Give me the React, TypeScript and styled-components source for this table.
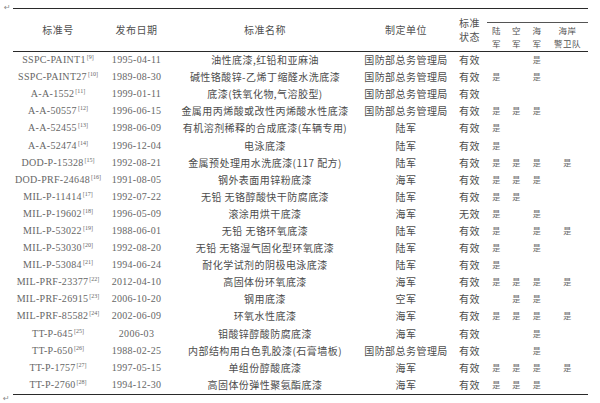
import styled, { createGlobalStyle } from "styled-components";

const GlobalStyle = createGlobalStyle`
  html, body {
    margin: 0;
    padding: 0;
    background: #fff;
  }
  body {
    font-family: "Liberation Serif", "Noto Sans CJK SC", serif;
    color: #444;
  }
`;

const Page = styled.div`
  width: 600px;
  height: 403px;
  box-sizing: border-box;
  padding-top: 8px;
  display: grid;
  grid-template-columns: 13px 575px;
  grid-template-rows: auto auto;
  overflow: hidden;
`;

const ParaMark = styled.span<{ $bottom?: boolean }>`
  font-family: "DejaVu Sans", sans-serif;
  font-size: 8px;
  line-height: 8px;
  color: #8a8a8a;
  padding-left: ${(p) => (p.$bottom ? "3px" : "4px")};
  margin-top: ${(p) => (p.$bottom ? "0" : "-4px")};
`;

const Table = styled.table`
  border-collapse: collapse;
  table-layout: fixed;
  width: 575px;
  border-top: 1.5px solid #2a2a2a;
  border-bottom: 1.5px solid #2a2a2a;
`;

const HeadCell = styled.th<{ $sub?: boolean; $group?: boolean }>`
  padding: 0;
  font-weight: normal;
  font-family: "Noto Sans CJK SC", sans-serif;
  font-size: ${(p) => (p.$sub ? "8.5px" : "10px")};
  line-height: ${(p) => (p.$sub ? "12.5px" : "14px")};
  letter-spacing: 0.5px;
  color: #505050;
  text-align: center;
  vertical-align: middle;
  border-bottom: ${(p) => (p.$group ? "1px solid #555" : "1px solid #2a2a2a")};
`;

const TopRow = styled.tr`
  height: 13.5px;
`;

const SubRow = styled.tr`
  height: 29px;
`;

const BodyRow = styled.tr`
  height: 17.1px;
`;

const Cell = styled.td<{ $kind: "latin" | "cjk" | "mark" }>`
  padding: 0;
  height: 17.1px;
  line-height: 12px;
  text-align: center;
  vertical-align: middle;
  white-space: nowrap;
  overflow: visible;
  font-family: ${(p) =>
    p.$kind === "latin"
      ? '"Liberation Serif", serif'
      : '"Noto Sans CJK SC", sans-serif'};
  font-size: ${(p) => (p.$kind === "mark" ? "8px" : "10px")};
  letter-spacing: ${(p) => (p.$kind === "cjk" ? "0.45px" : "0.3px")};
  color: ${(p) => (p.$kind === "latin" ? "#666" : p.$kind === "mark" ? "#6a6a6a" : "#4c4c4c")};
`;

const Ref = styled.sup`
  font-size: 6px;
  line-height: 0;
  vertical-align: 4px;
  margin-left: 1px;
  letter-spacing: 0;
`;

type Row = {
  id: string;
  ref: number;
  date: string;
  name: string;
  unit: string;
  status: string;
  marks: [number, number, number, number];
};

const DLA = "国防部总务管理局";

const rows: Row[] = [
  { id: "SSPC-PAINT1", ref: 9, date: "1995-04-11", name: "油性底漆,红铅和亚麻油", unit: DLA, status: "有效", marks: [0, 0, 1, 0] },
  { id: "SSPC-PAINT27", ref: 10, date: "1989-08-30", name: "碱性铬酸锌-乙烯丁缩醛水洗底漆", unit: DLA, status: "有效", marks: [1, 0, 1, 0] },
  { id: "A-A-1552", ref: 11, date: "1999-01-11", name: "底漆(铁氧化物,气溶胶型)", unit: DLA, status: "有效", marks: [0, 0, 0, 0] },
  { id: "A-A-50557", ref: 12, date: "1996-06-15", name: "金属用丙烯酸或改性丙烯酸水性底漆", unit: DLA, status: "有效", marks: [1, 1, 1, 0] },
  { id: "A-A-52455", ref: 13, date: "1998-06-09", name: "有机溶剂稀释的合成底漆(车辆专用)", unit: "陆军", status: "有效", marks: [1, 0, 0, 0] },
  { id: "A-A-52474", ref: 14, date: "1996-12-04", name: "电泳底漆", unit: "陆军", status: "有效", marks: [1, 0, 0, 0] },
  { id: "DOD-P-15328", ref: 15, date: "1992-08-21", name: "金属预处理用水洗底漆(117 配方)", unit: "陆军", status: "有效", marks: [1, 1, 1, 1] },
  { id: "DOD-PRF-24648", ref: 16, date: "1991-08-05", name: "钢外表面用锌粉底漆", unit: "海军", status: "有效", marks: [1, 1, 1, 0] },
  { id: "MIL-P-11414", ref: 17, date: "1992-07-22", name: "无铅 无铬醇酸快干防腐底漆", unit: "陆军", status: "有效", marks: [1, 1, 0, 0] },
  { id: "MIL-P-19602", ref: 18, date: "1996-05-09", name: "滚涂用烘干底漆", unit: "海军", status: "无效", marks: [1, 0, 1, 0] },
  { id: "MIL-P-53022", ref: 19, date: "1988-06-01", name: "无铅 无铬环氧底漆", unit: "陆军", status: "有效", marks: [1, 0, 1, 1] },
  { id: "MIL-P-53030", ref: 20, date: "1992-08-20", name: "无铅 无铬湿气固化型环氧底漆", unit: "陆军", status: "有效", marks: [1, 0, 1, 0] },
  { id: "MIL-P-53084", ref: 21, date: "1994-06-24", name: "耐化学试剂的阴极电泳底漆", unit: "陆军", status: "有效", marks: [1, 0, 0, 0] },
  { id: "MIL-PRF-23377", ref: 22, date: "2012-04-10", name: "高固体份环氧底漆", unit: "海军", status: "有效", marks: [1, 1, 1, 1] },
  { id: "MIL-PRF-26915", ref: 23, date: "2006-10-20", name: "钢用底漆", unit: "空军", status: "有效", marks: [0, 1, 1, 0] },
  { id: "MIL-PRF-85582", ref: 24, date: "2002-06-09", name: "环氧水性底漆", unit: "海军", status: "有效", marks: [1, 1, 1, 1] },
  { id: "TT-P-645", ref: 25, date: "2006-03", name: "钼酸锌醇酸防腐底漆", unit: "海军", status: "有效", marks: [0, 0, 1, 0] },
  { id: "TT-P-650", ref: 26, date: "1988-02-25", name: "内部结构用白色乳胶漆(石膏墙板)", unit: DLA, status: "有效", marks: [0, 0, 1, 0] },
  { id: "TT-P-1757", ref: 27, date: "1997-05-15", name: "单组份醇酸底漆", unit: "海军", status: "有效", marks: [1, 1, 1, 1] },
  { id: "TT-P-2760", ref: 28, date: "1994-12-30", name: "高固体份弹性聚氨酯底漆", unit: "海军", status: "有效", marks: [1, 1, 1, 0] },
];

const colWidths = [90, 67, 190, 92, 35, 19, 21, 20, 41];

export default function App() {
  return (
    <>
      <GlobalStyle />
      <Page>
        <ParaMark>↵</ParaMark>
        <Table>
          <colgroup>
            {colWidths.map((w, i) => (
              <col key={i} style={{ width: w }} />
            ))}
          </colgroup>
          <thead>
            <TopRow>
              <HeadCell rowSpan={2}>标准号</HeadCell>
              <HeadCell rowSpan={2}>发布日期</HeadCell>
              <HeadCell rowSpan={2}>标准名称</HeadCell>
              <HeadCell rowSpan={2}>制定单位</HeadCell>
              <HeadCell rowSpan={2}>
                标准
                <br />
                状态
              </HeadCell>
              <HeadCell colSpan={4} $group />
            </TopRow>
            <SubRow>
              <HeadCell $sub>
                陆<br />军
              </HeadCell>
              <HeadCell $sub>
                空<br />军
              </HeadCell>
              <HeadCell $sub>
                海<br />军
              </HeadCell>
              <HeadCell $sub>
                海岸
                <br />
                警卫队
              </HeadCell>
            </SubRow>
          </thead>
          <tbody>
            {rows.map((r) => (
              <BodyRow key={r.id}>
                <Cell $kind="latin">
                  {r.id}
                  <Ref>[{r.ref}]</Ref>
                </Cell>
                <Cell $kind="latin">{r.date}</Cell>
                <Cell $kind="cjk">{r.name}</Cell>
                <Cell $kind="cjk">{r.unit}</Cell>
                <Cell $kind="cjk">{r.status}</Cell>
                {r.marks.map((m, i) => (
                  <Cell key={i} $kind="mark">
                    {m ? "是" : ""}
                  </Cell>
                ))}
              </BodyRow>
            ))}
          </tbody>
        </Table>
        <ParaMark $bottom>↵</ParaMark>
      </Page>
    </>
  );
}
